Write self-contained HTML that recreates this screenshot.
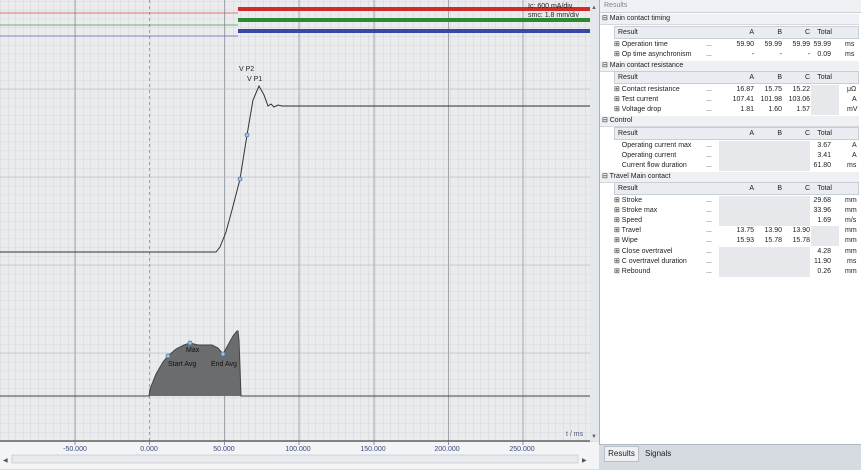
<!DOCTYPE html>
<html><head><meta charset="utf-8"><style>
body{margin:0;width:861px;height:469px;overflow:hidden;background:#d9dde3;font-family:"Liberation Sans",sans-serif;font-size:7px;color:#222;position:relative}
.a{position:absolute;white-space:nowrap}
#rp{position:absolute;left:599px;top:0;width:261px;height:444px;background:#fff;border-left:1px solid #a9b3bf;border-right:1px solid #a9b3bf}
.sec{position:absolute;left:0;width:259px;height:10px;background:#eef0f3;border-bottom:1px solid #d4d8de;font-size:7px;line-height:10px}
.hdr{position:absolute;left:14px;width:243px;height:11px;background:#e9ecf0;border:1px solid #c8ced6;font-size:7px;line-height:11px}
.row{position:absolute;left:14px;width:243px;height:10px;font-size:7px;line-height:10px}
.c{position:absolute;text-align:right}
.g{position:absolute;background:#e6e8eb;height:10px}
</style></head><body>
<svg class="a" style="left:0;top:0" width="599" height="469">
<defs>
<pattern id="mn" width="7.5" height="8.8" patternUnits="userSpaceOnUse" x="0.5" y="1">
<path d="M0 0V8.8M0 0H7.5" stroke="#c4c8ce" stroke-width="0.6" fill="none"/></pattern>
</defs>
<rect x="0" y="0" width="590" height="441" fill="#eaebed"/>
<rect x="0" y="0" width="590" height="441" fill="url(#mn)"/>
<g stroke="#9aa0a8" stroke-width="0.9">
<line x1="75" y1="0" x2="75" y2="441"/><line x1="224.5" y1="0" x2="224.5" y2="441"/><line x1="299" y1="0" x2="299" y2="441"/><line x1="374" y1="0" x2="374" y2="441"/><line x1="448.5" y1="0" x2="448.5" y2="441"/><line x1="523" y1="0" x2="523" y2="441"/>
</g>
<g stroke="#b0b4ba" stroke-width="0.6">
<line x1="0" y1="89" x2="590" y2="89"/><line x1="0" y1="177" x2="590" y2="177"/><line x1="0" y1="265" x2="590" y2="265"/><line x1="0" y1="353" x2="590" y2="353"/>
</g>
<line x1="149.5" y1="0" x2="149.5" y2="441" stroke="#8a9098" stroke-width="0.8" stroke-dasharray="3,3"/>
<line x1="0" y1="13" x2="238" y2="13" stroke="#d45050" stroke-width="0.8"/>
<line x1="0" y1="25" x2="238" y2="25" stroke="#4f9a4f" stroke-width="0.8"/>
<line x1="0" y1="36" x2="238" y2="36" stroke="#5a68b0" stroke-width="0.8"/>
<rect x="238" y="7" width="352" height="4" fill="#d02a2a"/>
<rect x="238" y="18" width="352" height="4" fill="#2a8a34"/>
<rect x="238" y="29" width="352" height="4" fill="#3848a8"/>
<path d="M0 252H216L220 247L226 232L232 210L240 179L247 135L253 100L259 86L264 95L268 106L271 104L274 107L278 105L282 106L590 106" fill="none" stroke="#333" stroke-width="1"/>
<circle cx="240" cy="179" r="2" fill="#a9c4dc" stroke="#4a79a0" stroke-width="0.8"/>
<circle cx="247" cy="135" r="2" fill="#a9c4dc" stroke="#4a79a0" stroke-width="0.8"/>
<path d="M0 396H149L150 389L156 374L163 362L168 356L176 349L184 345L190 343L198 345L212 345L218 348L223 354L228 345L233 336L237 331L238 331L239 340L241 396L300 396L590 396" fill="#6b6c6e" stroke="#444" stroke-width="1"/>
<circle cx="168" cy="356" r="2" fill="#a9c4dc" stroke="#4a79a0" stroke-width="0.8"/>
<circle cx="190" cy="343" r="2" fill="#a9c4dc" stroke="#4a79a0" stroke-width="0.8"/>
<circle cx="223" cy="354" r="2" fill="#a9c4dc" stroke="#4a79a0" stroke-width="0.8"/>
<text x="239" y="71" font-size="7" fill="#222" font-family="Liberation Sans">V P2</text>
<text x="247" y="81" font-size="7" fill="#222" font-family="Liberation Sans">V P1</text>
<text x="186" y="352" font-size="7" fill="#111" font-family="Liberation Sans">Max</text>
<text x="168" y="366" font-size="7" fill="#111" font-family="Liberation Sans">Start Avg</text>
<text x="211" y="366" font-size="7" fill="#111" font-family="Liberation Sans">End Avg</text>
<text x="528" y="8" font-size="7" fill="#222" font-family="Liberation Sans">Ic: 600 mA/div</text>
<text x="528" y="17" font-size="7" fill="#222" font-family="Liberation Sans">smc: 1.8 mm/div</text>
<text x="566" y="436" font-size="7" fill="#4a5a7a" font-family="Liberation Sans">t / ms</text>
<rect x="590" y="0" width="9" height="441" fill="#e4e7eb"/>
<text x="591" y="9" font-size="6" fill="#666">▲</text><text x="591" y="438" font-size="6" fill="#666">▼</text>
<line x1="0" y1="441" x2="590" y2="441" stroke="#222" stroke-width="1"/>
<rect x="0" y="442" width="599" height="27" fill="#f3f4f6"/>
<g stroke="#667" stroke-width="0.7">
<path d="M75 442v3M149.5 442v3M224.5 442v3M299 442v3M374 442v3M448.5 442v3M523 442v3"/>
</g>
<g font-size="7" fill="#3a4a7a" font-family="Liberation Sans" text-anchor="middle">
<text x="75" y="451">-50.000</text><text x="149" y="451">0.000</text><text x="224" y="451">50.000</text><text x="298" y="451">100.000</text><text x="373" y="451">150.000</text><text x="447" y="451">200.000</text><text x="522" y="451">250.000</text>
</g>
<rect x="12" y="455" width="566" height="8" fill="#e8eaee" stroke="#b8bec6" stroke-width="0.6"/>
<text x="3" y="462" font-size="6" fill="#555">◀</text><text x="582" y="462" font-size="6" fill="#555">▶</text>
</svg>
<div id="rp">
<div class="a" style="left:0;top:0;width:259px;height:12px;background:#eef0f3;border-bottom:1px solid #c8ced6;line-height:12px;color:#7b8694;padding-left:4px">Results</div>

<div class="sec" style="top:14px">&nbsp;⊟ Main contact timing</div>
<div class="hdr" style="top:26px"><span class="c" style="left:3px">Result</span><span class="c" style="left:110px;width:29px">A</span><span class="c" style="left:140px;width:27px">B</span><span class="c" style="left:168px;width:27px">C</span><span class="c" style="left:197px;width:20px">Total</span></div>
<div class="row" style="top:40px">⊞ Operation time<span class="c" style="left:92px">...</span><span class="c" style="left:110px;width:30px">59.90</span><span class="c" style="left:140px;width:28px">59.99</span><span class="c" style="left:168px;width:28px">59.99</span><span class="c" style="left:197px;width:20px">59.99</span><span class="c" style="left:231px">ms</span></div>
<div class="row" style="top:50px">⊞ Op time asynchronism<span class="c" style="left:92px">...</span><span class="c" style="left:110px;width:30px">-</span><span class="c" style="left:140px;width:28px">-</span><span class="c" style="left:168px;width:28px">-</span><span class="c" style="left:197px;width:20px">0.09</span><span class="c" style="left:231px">ms</span></div>

<div class="sec" style="top:61px">&nbsp;⊟ Main contact resistance</div>
<div class="hdr" style="top:71px"><span class="c" style="left:3px">Result</span><span class="c" style="left:110px;width:29px">A</span><span class="c" style="left:140px;width:27px">B</span><span class="c" style="left:168px;width:27px">C</span><span class="c" style="left:197px;width:20px">Total</span></div>
<div class="row" style="top:85px">⊞ Contact resistance<span class="c" style="left:92px">...</span><span class="c" style="left:110px;width:30px">16.87</span><span class="c" style="left:140px;width:28px">15.75</span><span class="c" style="left:168px;width:28px">15.22</span><span class="g" style="left:197px;width:28px;top:0"></span><span class="c" style="left:233px">μΩ</span></div>
<div class="row" style="top:95px">⊞ Test current<span class="c" style="left:92px">...</span><span class="c" style="left:110px;width:30px">107.41</span><span class="c" style="left:140px;width:28px">101.98</span><span class="c" style="left:168px;width:28px">103.06</span><span class="g" style="left:197px;width:28px;top:0"></span><span class="c" style="left:238px">A</span></div>
<div class="row" style="top:105px">⊞ Voltage drop<span class="c" style="left:92px">...</span><span class="c" style="left:110px;width:30px">1.81</span><span class="c" style="left:140px;width:28px">1.60</span><span class="c" style="left:168px;width:28px">1.57</span><span class="g" style="left:197px;width:28px;top:0"></span><span class="c" style="left:233px">mV</span></div>

<div class="sec" style="top:116px">&nbsp;⊟ Control</div>
<div class="hdr" style="top:127px"><span class="c" style="left:3px">Result</span><span class="c" style="left:110px;width:29px">A</span><span class="c" style="left:140px;width:27px">B</span><span class="c" style="left:168px;width:27px">C</span><span class="c" style="left:197px;width:20px">Total</span></div>
<div class="row" style="top:141px">&nbsp;&nbsp;&nbsp;&nbsp;Operating current max<span class="c" style="left:92px">...</span><span class="g" style="left:105px;width:91px;top:0"></span><span class="c" style="left:197px;width:20px">3.67</span><span class="c" style="left:238px">A</span></div>
<div class="row" style="top:151px">&nbsp;&nbsp;&nbsp;&nbsp;Operating current<span class="c" style="left:92px">...</span><span class="g" style="left:105px;width:91px;top:0"></span><span class="c" style="left:197px;width:20px">3.41</span><span class="c" style="left:238px">A</span></div>
<div class="row" style="top:161px">&nbsp;&nbsp;&nbsp;&nbsp;Current flow duration<span class="c" style="left:92px">...</span><span class="g" style="left:105px;width:91px;top:0"></span><span class="c" style="left:197px;width:20px">61.80</span><span class="c" style="left:233px">ms</span></div>

<div class="sec" style="top:172px">&nbsp;⊟ Travel Main contact</div>
<div class="hdr" style="top:182px"><span class="c" style="left:3px">Result</span><span class="c" style="left:110px;width:29px">A</span><span class="c" style="left:140px;width:27px">B</span><span class="c" style="left:168px;width:27px">C</span><span class="c" style="left:197px;width:20px">Total</span></div>
<div class="row" style="top:196px">⊞ Stroke<span class="c" style="left:92px">...</span><span class="g" style="left:105px;width:91px;top:0"></span><span class="c" style="left:197px;width:20px">29.68</span><span class="c" style="left:231px">mm</span></div>
<div class="row" style="top:206px">⊞ Stroke max<span class="c" style="left:92px">...</span><span class="g" style="left:105px;width:91px;top:0"></span><span class="c" style="left:197px;width:20px">33.96</span><span class="c" style="left:231px">mm</span></div>
<div class="row" style="top:216px">⊞ Speed<span class="c" style="left:92px">...</span><span class="g" style="left:105px;width:91px;top:0"></span><span class="c" style="left:197px;width:20px">1.69</span><span class="c" style="left:231px">m/s</span></div>
<div class="row" style="top:226px">⊞ Travel<span class="c" style="left:92px">...</span><span class="c" style="left:110px;width:30px">13.75</span><span class="c" style="left:140px;width:28px">13.90</span><span class="c" style="left:168px;width:28px">13.90</span><span class="g" style="left:197px;width:28px;top:0"></span><span class="c" style="left:231px">mm</span></div>
<div class="row" style="top:236px">⊞ Wipe<span class="c" style="left:92px">...</span><span class="c" style="left:110px;width:30px">15.93</span><span class="c" style="left:140px;width:28px">15.78</span><span class="c" style="left:168px;width:28px">15.78</span><span class="g" style="left:197px;width:28px;top:0"></span><span class="c" style="left:231px">mm</span></div>
<div class="row" style="top:247px">⊞ Close overtravel<span class="c" style="left:92px">...</span><span class="g" style="left:105px;width:91px;top:0"></span><span class="c" style="left:197px;width:20px">4.28</span><span class="c" style="left:231px">mm</span></div>
<div class="row" style="top:257px">⊞ C overtravel duration<span class="c" style="left:92px">...</span><span class="g" style="left:105px;width:91px;top:0"></span><span class="c" style="left:197px;width:20px">11.90</span><span class="c" style="left:233px">ms</span></div>
<div class="row" style="top:267px">⊞ Rebound<span class="c" style="left:92px">...</span><span class="g" style="left:105px;width:91px;top:0"></span><span class="c" style="left:197px;width:20px">0.26</span><span class="c" style="left:231px">mm</span></div>
</div>
<div class="a" style="left:599px;top:444px;width:262px;height:25px;background:#d6dbe2;border-top:1px solid #b0b8c2"></div>
<div class="a" style="left:604px;top:446px;width:33px;height:14px;background:#eef0f3;border:1px solid #b8bec6;font-size:8px;line-height:14px;text-align:center">Results</div>
<div class="a" style="left:645px;top:447px;font-size:8px;line-height:14px">Signals</div>
</body></html>
